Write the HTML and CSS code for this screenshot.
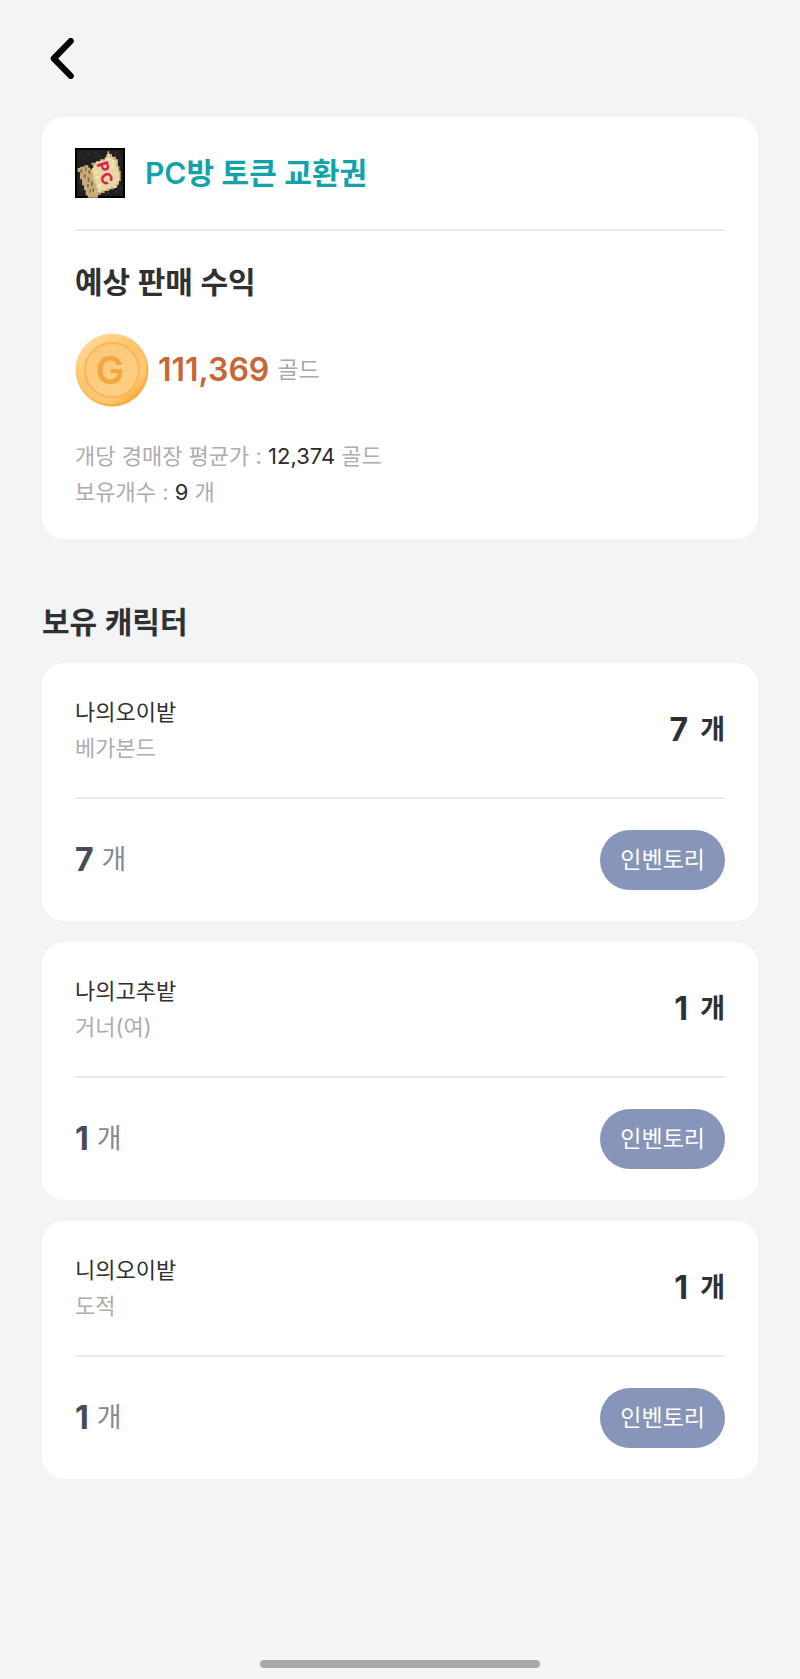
FILE: index.html
```html
<!DOCTYPE html>
<html lang="ko">
<head>
<meta charset="utf-8">
<meta name="viewport" content="width=device-width, initial-scale=1">
<title>PC방 토큰 교환권</title>
<link rel="stylesheet" href="styles.css">
</head>
<body>
<div class="screen">
  <header class="topbar">
    <button class="back" type="button" aria-label="뒤로">
      <svg class="back-icon" viewBox="0 0 24 40" aria-hidden="true"><path d="M20 3 3.500 20 20 37"/></svg>
    </button>
  </header>
  <main class="content">
    <section class="card summary">
      <div class="item">
        <svg class="item-icon" viewBox="26 24 150 150" aria-hidden="true">
          <rect x="26" y="24" width="150" height="150" fill="#000"/>
          <rect x="32" y="30" width="138" height="138" fill="#202021"/>
          <path fill="#2e2e30" d="M40 36h8v6h-8zM62 40h10v6H62zM86 34h6v10h-6zM48 50h6v6h-6zM96 46h8v5h-8zM144 36h10v6h-10zM158 54h6v10h-6zM38 120h6v12h-6zM44 146h8v8h-8zM120 156h10v6h-10zM146 152h12v6h-12zM160 140h6v6h-6z"/>
          <path fill="#c9ad7c" d="M34 84h8v-4h12v-4h12v7h6v5h8V74h-5v-6h14v-5h12v-5h14v-6h4v-8h4V34h6v8h8v8h12v8h6v20h4v14h4v32h-5v10h-5v8h-10v6h-14v5h-14v6h-12v5h-8v9H64v-7h-6v-16h-5v-14h-6v-18h-6V96h-7z"/>
          <path fill="#ead7a6" d="M82 76h6v-9h14v-5h14v-8h8V42h6v10h10v8h10v22h5v14h4v26h-5v12h-6v6h-14v6h-14v5h-14v5H94v-12h-4v-14h-5v-14h-4V98h-4V84h5z"/>
          <path fill="#8c7249" d="M42 88h6v12h-6zM56 82h5v12h-5zM66 90h6v12h-6zM52 102h6v12h-6zM64 112h6v14h-6zM74 124h6v14h-6zM62 132h6v10h-6zM78 144h5v12h-5zM70 148h4v10h-4z"/>
          <path fill="#f7e9c2" d="M122 54h7v6h-7zM138 60h6v8h-6zM90 108h8v8h-8zM96 132h8v8h-8zM142 138h8v6h-8zM86 94h6v6h-6zM134 78h6v6h-6z"/>
          <g class="ticket-mark">
            <text transform="translate(89 72) rotate(72)" y="-2">P</text>
            <text transform="translate(116 98) rotate(50)" y="24">C</text>
          </g>
        </svg>
        <h1 class="item-name">PC방 토큰 교환권</h1>
      </div>
      <hr class="divider">
      <h2 class="title">예상 판매 수익</h2>
      <div class="profit">
        <svg class="coin" viewBox="0 0 74 74" aria-hidden="true">
          <defs>
            <linearGradient id="rim" x1="0.200" y1="0" x2="0.750" y2="1">
              <stop offset="0" stop-color="#fde0a6"/><stop offset="0.300" stop-color="#fcc978"/><stop offset="1" stop-color="#fba836"/>
            </linearGradient>
            <linearGradient id="edge" x1="0.100" y1="0" x2="0.900" y2="1">
              <stop offset="0" stop-color="#fddb9c"/><stop offset="0.400" stop-color="#fdc46c"/><stop offset="0.800" stop-color="#fec876"/><stop offset="1" stop-color="#fba631"/>
            </linearGradient>
            <linearGradient id="face" x1="0" y1="0" x2="0.600" y2="1">
              <stop offset="0" stop-color="#fdc677"/><stop offset="1" stop-color="#fecf84"/>
            </linearGradient>
          </defs>
          <circle cx="37" cy="37" r="36.500" fill="url(#rim)"/>
          <circle cx="36.500" cy="36.500" r="31" fill="none" stroke="url(#edge)" stroke-width="7"/>
          <circle cx="37" cy="37" r="27" fill="url(#face)" stroke="#f9b55a" stroke-width="2"/>
          <text class="coin-letter" x="35" y="51" text-anchor="middle">G</text>
        </svg>
        <p class="profit-text"><strong class="profit-value">111,369</strong><span class="unit">골드</span></p>
      </div>
      <p class="line muted">개당 경매장 평균가 : <span class="value">12,374</span> 골드</p>
      <p class="line muted">보유개수 : <span class="value">9</span> 개</p>
    </section>

    <h2 class="title section-title">보유 캐릭터</h2>
    <ul class="list">
      <li class="card">
        <div class="row">
          <div><p class="line name">나의오이밭</p><p class="line muted">베가본드</p></div>
          <p class="total"><span class="num">7</span><span>개</span></p>
        </div>
        <hr class="divider">
        <div class="row">
          <p class="count"><strong class="num">7</strong><span>개</span></p>
          <button class="pill" type="button">인벤토리</button>
        </div>
      </li>
      <li class="card">
        <div class="row">
          <div><p class="line name">나의고추밭</p><p class="line muted">거너(여)</p></div>
          <p class="total"><span class="num">1</span><span>개</span></p>
        </div>
        <hr class="divider">
        <div class="row">
          <p class="count"><strong class="num">1</strong><span>개</span></p>
          <button class="pill" type="button">인벤토리</button>
        </div>
      </li>
      <li class="card">
        <div class="row">
          <div><p class="line name">니의오이밭</p><p class="line muted">도적</p></div>
          <p class="total"><span class="num">1</span><span>개</span></p>
        </div>
        <hr class="divider">
        <div class="row">
          <p class="count"><strong class="num">1</strong><span>개</span></p>
          <button class="pill" type="button">인벤토리</button>
        </div>
      </li>
    </ul>
  </main>
  <div class="home-bar"></div>
</div>
</body>
</html>
```
FILE: styles.css
```css
* { box-sizing: border-box; }

body {
  margin: 0;
  background: #f2f4f6;
  color: #2f3032;
  font-family: Inter, "Noto Sans CJK KR", sans-serif;
}

h1, h2, p, ul { margin: 0; padding: 0; }
ul { list-style: none; }

.screen {
  display: flex;
  flex-direction: column;
  min-height: 100vh;
  padding: 0 42px 11px;
}

.topbar { padding: 38px 8px; }

.back {
  display: block;
  padding: 0;
  border: 0;
  background: none;
}

.back-icon {
  display: block;
  width: 25px;
  height: 41px;
  fill: none;
  stroke: #000;
  stroke-width: 6;
  stroke-linecap: round;
  stroke-linejoin: round;
}

.content { flex: 1; }

.card {
  padding: 31px 33px;
  border-radius: 22px;
  background: #fff;
}

.summary { padding-bottom: 29px; }

.item {
  display: flex;
  align-items: center;
  gap: 20px;
}

.item-icon { width: 50px; height: 50px; }

.item-name {
  color: #12a3aa;
  font-size: 30px;
  font-weight: 600;
  line-height: 44px;
}

.ticket-mark {
  fill: #dc1f50;
  stroke: #dc1f50;
  stroke-width: 1;
  font: 700 46px Inter, sans-serif;
}

.divider {
  height: 2px;
  margin: 31px 0;
  border: 0;
  background: #e9eaeb;
}

.item + .divider { margin-bottom: 29px; }

.title {
  font-size: 30px;
  font-weight: 600;
  line-height: 44px;
}

.profit {
  display: flex;
  align-items: center;
  gap: 9px;
  margin: 29px 0 31px;
}

.coin { width: 74px; height: 74px; }

.coin-letter {
  fill: #f3a53f;
  font: 600 38px Inter, sans-serif;
}

.profit-text {
  display: flex;
  align-items: center;
  gap: 8px;
  line-height: 44px;
}

.profit-value {
  color: #c76736;
  font-size: 32px;
  font-weight: 600;
}

.unit { color: #a9a9aa; font-size: 23px; }

.line {
  font-size: 22px;
  line-height: 36px;
}

.muted { color: #adadae; }
.value { color: #2b2b2d; }

.section-title { margin: 61px 0 19px; }

.list { display: grid; gap: 21px; }

.row {
  display: flex;
  align-items: center;
  justify-content: space-between;
}

.total, .count {
  display: flex;
  align-items: center;
  font-size: 27px;
  line-height: 44px;
}

.total { gap: 12px; font-weight: 600; }
.count { gap: 8px; color: #858994; }

.num { font-size: 32px; font-weight: 700; }
.count .num { color: #4a4a57; }

.pill {
  padding: 12px 20px;
  border: 0;
  border-radius: 30px;
  background: #8795ba;
  color: #fff;
  font-family: inherit;
  font-size: 23px;
  line-height: 36px;
}

.home-bar {
  align-self: center;
  width: 39%;
  height: 8px;
  border-radius: 4px;
  background: #a7a8aa;
}
```
